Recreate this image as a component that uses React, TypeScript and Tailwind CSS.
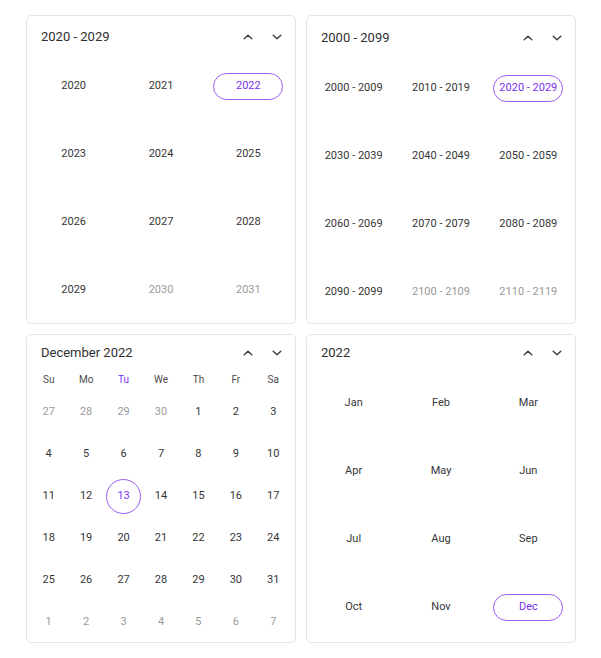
import React from "react";

const PURPLE_TEXT = "text-[#7b2ff0]";

function Chevrons() {
  return (
    <div className="flex items-center gap-[5px] pr-[6px]">
      <button className="w-6 h-6 flex items-center justify-center">
        <svg width="10" height="6" viewBox="0 0 10 6" fill="none">
          <path d="M1.2 4.8L5 1.2L8.8 4.8" stroke="#3d3d3d" strokeWidth="1.4" strokeLinecap="round" strokeLinejoin="round" />
        </svg>
      </button>
      <button className="w-6 h-6 flex items-center justify-center">
        <svg width="10" height="6" viewBox="0 0 10 6" fill="none">
          <path d="M1.2 1.2L5 4.8L8.8 1.2" stroke="#3d3d3d" strokeWidth="1.4" strokeLinecap="round" strokeLinejoin="round" />
        </svg>
      </button>
    </div>
  );
}

function Header({ title, h }: { title: string; h: string }) {
  return (
    <div className={`flex items-center justify-between pl-[14px] ${h}`}>
      <span className="text-[13px] text-[#2f2f2f]">{title}</span>
      <Chevrons />
    </div>
  );
}

type Cell = { label: string; muted?: boolean; selected?: boolean };

function GridCell({ cell }: { cell: Cell }) {
  return (
    <div className="h-[54px] flex items-center justify-center">
      {cell.selected ? (
        <div className={`w-[70px] h-[27px] rounded-full border border-[#9a5cf5] flex items-center justify-center text-[11px] ${PURPLE_TEXT}`}>
          {cell.label}
        </div>
      ) : (
        <span className={`text-[11px] ${cell.muted ? "text-[#9a9a9a]" : "text-[#363636]"}`}>{cell.label}</span>
      )}
    </div>
  );
}

function Card({ children }: { children: React.ReactNode }) {
  return (
    <div className="w-[270px] h-[309px] rounded-[5px] border border-[#e2e5ea] bg-white flex flex-col">{children}</div>
  );
}

const decadeYears: Cell[] = [
  { label: "2020" }, { label: "2021" }, { label: "2022", selected: true },
  { label: "2023" }, { label: "2024" }, { label: "2025" },
  { label: "2026" }, { label: "2027" }, { label: "2028" },
  { label: "2029" }, { label: "2030", muted: true }, { label: "2031", muted: true },
];

const decades: Cell[] = [
  { label: "2000 - 2009" }, { label: "2010 - 2019" }, { label: "2020 - 2029", selected: true },
  { label: "2030 - 2039" }, { label: "2040 - 2049" }, { label: "2050 - 2059" },
  { label: "2060 - 2069" }, { label: "2070 - 2079" }, { label: "2080 - 2089" },
  { label: "2090 - 2099" }, { label: "2100 - 2109", muted: true }, { label: "2110 - 2119", muted: true },
];

const months: Cell[] = ["Jan", "Feb", "Mar", "Apr", "May", "Jun", "Jul", "Aug", "Sep", "Oct", "Nov", "Dec"].map((m) => ({
  label: m,
  selected: m === "Dec",
}));

const weekDays = ["Su", "Mo", "Tu", "We", "Th", "Fr", "Sa"];

const days: Cell[] = [
  ...[27, 28, 29, 30].map((d) => ({ label: String(d), muted: true })),
  ...Array.from({ length: 31 }, (_, i) => ({ label: String(i + 1), selected: i + 1 === 13 })),
  ...[1, 2, 3, 4, 5, 6, 7].map((d) => ({ label: String(d), muted: true })),
];

function GridCard({ title, cells, headerH, gridMt }: { title: string; cells: Cell[]; headerH: string; gridMt: string }) {
  return (
    <Card>
      <Header title={title} h={headerH} />
      <div className={`grid grid-cols-3 gap-y-[14px] px-[3px] ${gridMt}`}>
        {cells.map((c, i) => (
          <GridCell key={i} cell={c} />
        ))}
      </div>
    </Card>
  );
}

function MonthCard() {
  return (
    <Card>
      <Header title="December 2022" h="h-[36px]" />
      <div className="grid grid-cols-7 px-[3px] h-[16px]">
        {weekDays.map((d) => (
          <div key={d} className={`flex items-center justify-center text-[10px] ${d === "Tu" ? PURPLE_TEXT : "text-[#4a4a4a]"}`}>
            {d}
          </div>
        ))}
      </div>
      <div className="grid grid-cols-7 gap-y-[6px] px-[3px] mt-[7px]">
        {days.map((c, i) => (
          <div key={i} className="h-[36px] flex items-center justify-center">
            {c.selected ? (
              <div className={`w-[35px] h-[35px] rounded-full border border-[#9a5cf5] flex items-center justify-center text-[11px] ${PURPLE_TEXT}`}>
                {c.label}
              </div>
            ) : (
              <span className={`text-[11px] ${c.muted ? "text-[#9a9a9a]" : "text-[#363636]"}`}>{c.label}</span>
            )}
          </div>
        ))}
      </div>
    </Card>
  );
}

export default function App() {
  return (
    <div className="w-[601px] h-[658px] bg-white pl-[26px] pt-[15px]" style={{ fontFamily: "Roboto, 'Liberation Sans', sans-serif" }}>
      <div className="grid grid-cols-[270px_270px] gap-[10px]">
        <GridCard title="2020 - 2029" cells={decadeYears} headerH="h-[42px]" gridMt="mt-[1px]" />
        <GridCard title="2000 - 2099" cells={decades} headerH="h-[44px]" gridMt="mt-[1px]" />
        <MonthCard />
        <GridCard title="2022" cells={months} headerH="h-[35px]" gridMt="mt-[6px]" />
      </div>
    </div>
  );
}
